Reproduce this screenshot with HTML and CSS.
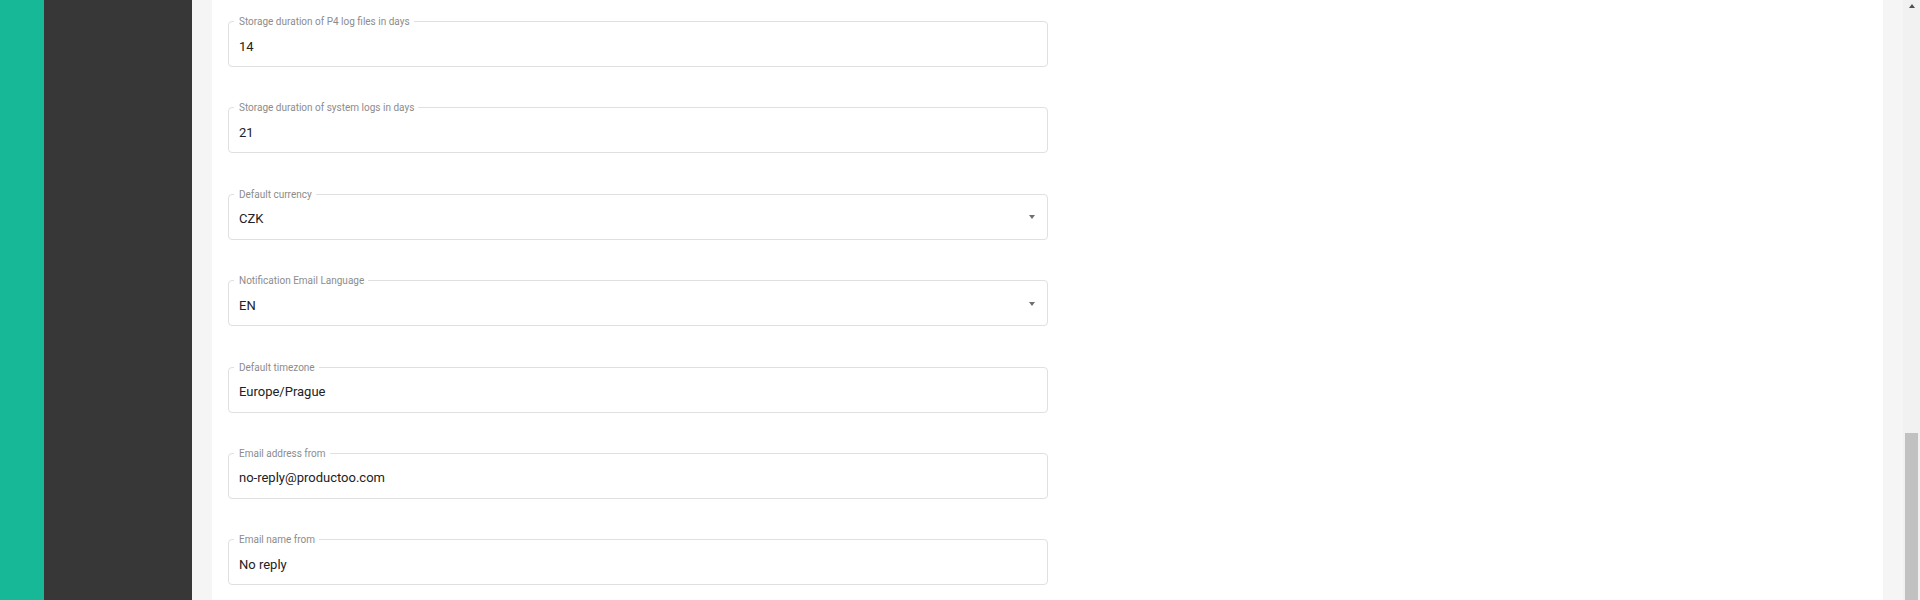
FILE: index.html
```html
<!DOCTYPE html>
<html lang="en">
<head>
    <meta charset="UTF-8">
    <meta name="viewport" content="width=device-width, initial-scale=1.0">
    <title>Settings</title>
    <link rel="stylesheet" href="styles.css">
</head>
<body>
    <div class="rail"></div>
    <div class="sidebar"></div>

    <main class="main">
        <div class="card">
            <div class="field">
                <span class="field-label">Storage duration of P4 log files in days</span>
                <span class="field-value">14</span>
            </div>
            <div class="field">
                <span class="field-label">Storage duration of system logs in days</span>
                <span class="field-value">21</span>
            </div>
            <div class="field field-select">
                <span class="field-label">Default currency</span>
                <span class="field-value">CZK</span>
                <span class="caret"></span>
            </div>
            <div class="field field-select">
                <span class="field-label">Notification Email Language</span>
                <span class="field-value">EN</span>
                <span class="caret"></span>
            </div>
            <div class="field">
                <span class="field-label">Default timezone</span>
                <span class="field-value">Europe/Prague</span>
            </div>
            <div class="field">
                <span class="field-label">Email address from</span>
                <span class="field-value">no-reply@productoo.com</span>
            </div>
            <div class="field">
                <span class="field-label">Email name from</span>
                <span class="field-value">No reply</span>
            </div>
        </div>
    </main>

    <div class="scrollbar">
        <span class="scroll-arrow"></span>
        <div class="scroll-thumb"></div>
    </div>
</body>
</html>
```

FILE: styles.css
```css
* {
    margin: 0;
    padding: 0;
    box-sizing: border-box;
}

body {
    font-family: Roboto, 'Noto Sans', sans-serif;
    height: 600px;
    overflow: hidden;
    display: flex;
    background: #ffffff;
}

.rail {
    width: 44px;
    background: #17b897;
    flex-shrink: 0;
}

.sidebar {
    width: 148px;
    background: #373737;
    flex-shrink: 0;
}

.main {
    flex: 1;
    background: #f5f5f5;
    padding: 0 20px;
}

.card {
    background: #ffffff;
    height: 100%;
    padding: 21px 16px 0;
}

.field {
    position: relative;
    width: 820px;
    height: 46px;
    border: 1px solid #e0e0e0;
    border-radius: 4px;
    margin-bottom: 40.4px;
    display: flex;
    align-items: center;
    padding: 4px 10px 0;
}

.field-label {
    position: absolute;
    top: -7px;
    left: 5px;
    padding: 0 4px 0 5px;
    background: #ffffff;
    font-size: 10px;
    line-height: 13px;
    color: #8c8c8c;
}

.field-value {
    font-size: 13px;
    color: #222222;
}

.caret {
    margin-left: auto;
    margin-right: 2px;
    width: 0;
    height: 0;
    border-left: 3.5px solid transparent;
    border-right: 3.5px solid transparent;
    border-top: 4px solid #6f6f6f;
    margin-top: -3px;
}

.scrollbar {
    width: 17px;
    flex-shrink: 0;
    background: #f1f1f1;
    display: flex;
    flex-direction: column;
    align-items: center;
}

.scroll-arrow {
    margin-top: 4px;
    width: 0;
    height: 0;
    border-left: 3.5px solid transparent;
    border-right: 3.5px solid transparent;
    border-bottom: 4px solid #505050;
}

.scroll-thumb {
    margin-top: auto;
    width: 13px;
    height: 167px;
    background: #c1c1c1;
}
```
